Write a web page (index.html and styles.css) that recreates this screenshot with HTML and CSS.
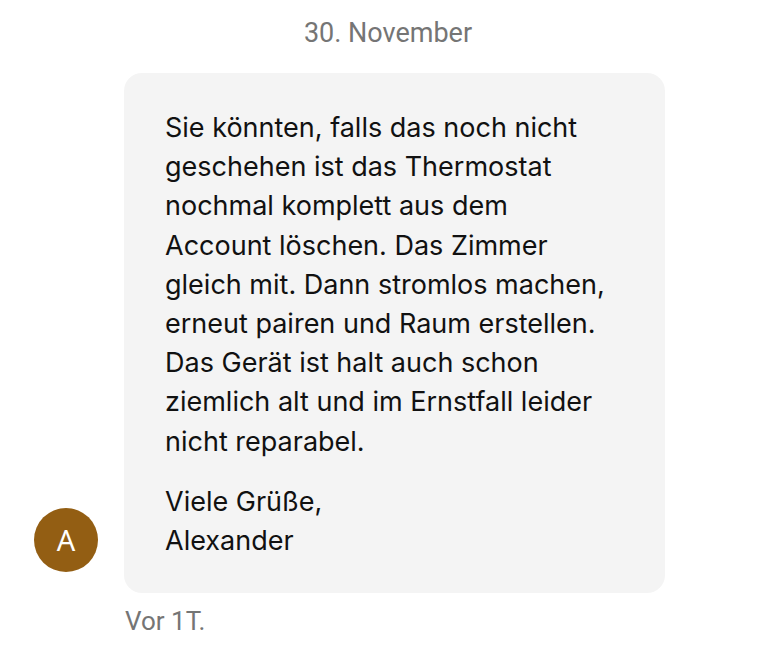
FILE: index.html
```html
<!DOCTYPE html>
<html lang="de">
<head>
<meta charset="utf-8">
<link rel="stylesheet" href="styles.css">
</head>
<body>
<div class="thread">
  <div class="date">30. November</div>
  <div class="row">
    <div class="avatar">A</div>
    <div class="col">
      <div class="bubble">
        <p>Sie könnten, falls das noch nicht geschehen ist das Thermostat nochmal komplett aus dem Account löschen. Das Zimmer gleich mit. Dann stromlos machen, erneut pairen und Raum erstellen. Das Gerät ist halt auch schon ziemlich alt und im Ernstfall leider nicht reparabel.</p>
        <p>Viele Grüße,<br>Alexander</p>
      </div>
      <div class="time">Vor 1T.</div>
    </div>
  </div>
</div>
</body>
</html>
```
FILE: styles.css
```css
html, body {
  margin: 0;
  padding: 0;
  background: #ffffff;
}
.thread {
  width: 776px;
  padding-top: 16px;
}
.date {
  font-family: Roboto, "Liberation Sans", sans-serif;
  font-size: 27px;
  line-height: 34px;
  color: #757575;
  text-align: center;
}
.row {
  display: flex;
  align-items: flex-start;
  margin-top: 23px;
  padding-left: 34px;
}
.avatar {
  flex: none;
  width: 64px;
  height: 64px;
  border-radius: 50%;
  background: #935e13;
  color: #ffffff;
  font-family: "Noto Sans", sans-serif;
  font-size: 29px;
  line-height: 64px;
  text-align: center;
  margin-top: 435px;
}
.col {
  margin-left: 26px;
  width: 541px;
}
.bubble {
  background: #f4f4f4;
  border-radius: 18px;
  padding: 35px 60px 33px 41px;
  font-family: Inter, sans-serif;
  font-size: 27px;
  line-height: 39.2px;
  color: #111111;
}
.bubble p {
  margin: 0;
}
.bubble p + p {
  margin-top: 21px;
}
.time {
  font-family: Roboto, "Liberation Sans", sans-serif;
  font-size: 26px;
  line-height: 32px;
  color: #757575;
  margin-top: 12px;
  padding-left: 1px;
}
```
